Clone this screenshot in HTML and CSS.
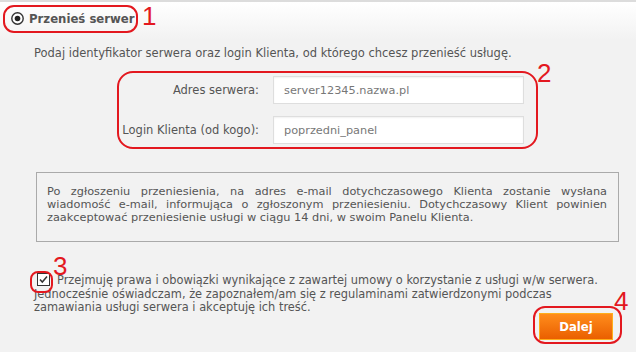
FILE: index.html
```html
<!DOCTYPE html>
<html lang="pl">

<head>
    <meta charset="UTF-8">
    <title>Przenieś serwer</title>
    <link rel="stylesheet" href="styles.css">
</head>

<body>
    <div class="page">
        <div class="head">
            <svg class="radio" width="13" height="13" viewBox="0 0 13 13">
                <circle cx="6.5" cy="6.5" r="5.7" fill="#fff" stroke="#333" stroke-width="1.4"/>
                <circle cx="6.5" cy="6.5" r="2.8" fill="#222"/>
            </svg>
            <span class="title">Przenieś serwer</span>
        </div>

        <p class="intro">Podaj identyfikator serwera oraz login Klienta, od którego chcesz przenieść usługę.</p>

        <div class="fields">
            <label class="label" for="addr">Adres serwera:</label>
            <input class="field" id="addr" type="text" value="server12345.nazwa.pl">
            <label class="label" for="login">Login Klienta (od kogo):</label>
            <input class="field" id="login" type="text" value="poprzedni_panel">
        </div>

        <div class="info">
            <span class="ln">Po zgłoszeniu przeniesienia, na adres e-mail dotychczasowego Klienta zostanie wysłana</span>
            <span class="ln">wiadomość e-mail, informująca o zgłoszonym przeniesieniu. Dotychczasowy Klient powinien</span>
            <span class="ln last">zaakceptować przeniesienie usługi w ciągu 14 dni, w swoim Panelu Klienta.</span>
        </div>

        <div class="agree">
            <svg class="check" width="13" height="13" viewBox="0 0 13 13">
                <rect x="0.5" y="0.5" width="12" height="12" fill="#fff" stroke="#333"/>
                <path d="M3 6.5 L5.3 9 L10 3.5" fill="none" stroke="#333" stroke-width="1.5"/>
            </svg>Przejmuję prawa i obowiązki wynikające z zawartej umowy o korzystanie z usługi w/w serwera.<br>
            Jednocześnie oświadczam, że zapoznałem/am się z regulaminami zatwierdzonymi podczas<br>
            zamawiania usługi serwera i akceptuję ich treść.
        </div>

        <div class="actions">
            <button class="btn" type="button">Dalej</button>
        </div>

        <!-- adnotacje -->
        <span class="mark mark-1"></span><span class="num num-1">1</span>
        <span class="mark mark-2"></span><span class="num num-2">2</span>
        <span class="mark mark-3"></span><span class="num num-3">3</span>
        <span class="mark mark-4"></span><span class="num num-4">4</span>
    </div>
</body>

</html>
```

FILE: styles.css
```css
body {
    margin: 0;
    background: #f2f2f2;
    font-family: "DejaVu Sans", sans-serif;
    color: #555;
}

.page {
    position: relative;
    height: 350px;
    border-top: 2px solid #dcdcdc;
    background: linear-gradient(#fff 0, #f2f2f2 38px, #f2f2f2 100%);
    overflow: hidden;
}

.head {
    display: flex;
    align-items: center;
    gap: 5px;
    height: 32px;
    padding-left: 11px;
}

.title {
    font-family: "DejaVu Sans Condensed", "DejaVu Sans", sans-serif;
    font-stretch: condensed;
    font-size: 13px;
    font-weight: bold;
    color: #555;
}

.intro {
    margin: 13px 0 0 34px;
    font-size: 11.5px;
    line-height: 13px;
}

.fields {
    display: grid;
    grid-template-columns: 259px 251px;
    column-gap: 14px;
    row-gap: 12px;
    align-items: center;
    margin-top: 16px;
}

.label {
    text-align: right;
    font-size: 11.5px;
}

.field {
    box-sizing: border-box;
    width: 251px;
    height: 28px;
    margin: 0;
    padding: 0 10px;
    border: 1px solid #dedede;
    box-shadow: inset 0 1px 2px rgba(0, 0, 0, 0.06);
    background: #fff;
    font-family: inherit;
    font-size: 11.3px;
    color: #777;
}

.info {
    box-sizing: border-box;
    width: 583px;
    height: 70px;
    margin: 28px 0 0 36px;
    padding: 12px 11px 0 10px;
    border: 1px solid #aaa;
    font-size: 11.3px;
    line-height: 13px;
}

.ln {
    display: block;
    white-space: nowrap;
    text-align: justify;
    text-align-last: justify;
}

.ln.last {
    text-align-last: left;
}

.agree {
    margin: 31px 0 0 34px;
    font-size: 11.4px;
    line-height: 13.5px;
    white-space: nowrap;
}

.check {
    margin: 0 7px -2px 3px;
}

.actions {
    display: flex;
    justify-content: flex-end;
    margin-top: -2px;
    padding-right: 23px;
}

.btn {
    width: 74px;
    height: 27px;
    border: 1px solid #ffae1a;
    background: linear-gradient(#ff8d1c, #ea5f00);
    color: #fff;
    font-family: "DejaVu Sans Condensed", "DejaVu Sans", sans-serif;
    font-stretch: condensed;
    font-size: 13px;
    font-weight: bold;
    cursor: pointer;
}

.mark {
    position: absolute;
    border: 2px solid #e3181f;
    box-sizing: border-box;
}

.mark-1 {
    left: 3px;
    top: 3px;
    width: 135px;
    height: 28px;
    border-radius: 11px;
}

.mark-2 {
    left: 117px;
    top: 69px;
    width: 421px;
    height: 78px;
    border-radius: 16px;
}

.mark-3 {
    left: 30px;
    top: 269px;
    width: 23px;
    height: 22px;
    border-radius: 8px;
}

.mark-4 {
    left: 533px;
    top: 304px;
    width: 89px;
    height: 38px;
    border-radius: 12px;
}

.num {
    position: absolute;
    font-family: "Liberation Sans", sans-serif;
    font-size: 26px;
    line-height: 26px;
    color: #e3181f;
}

.num-1 {
    left: 142px;
    top: 1px;
}

.num-2 {
    left: 537px;
    top: 58px;
}

.num-3 {
    left: 53px;
    top: 251px;
}

.num-4 {
    left: 614px;
    top: 286px;
}
```
